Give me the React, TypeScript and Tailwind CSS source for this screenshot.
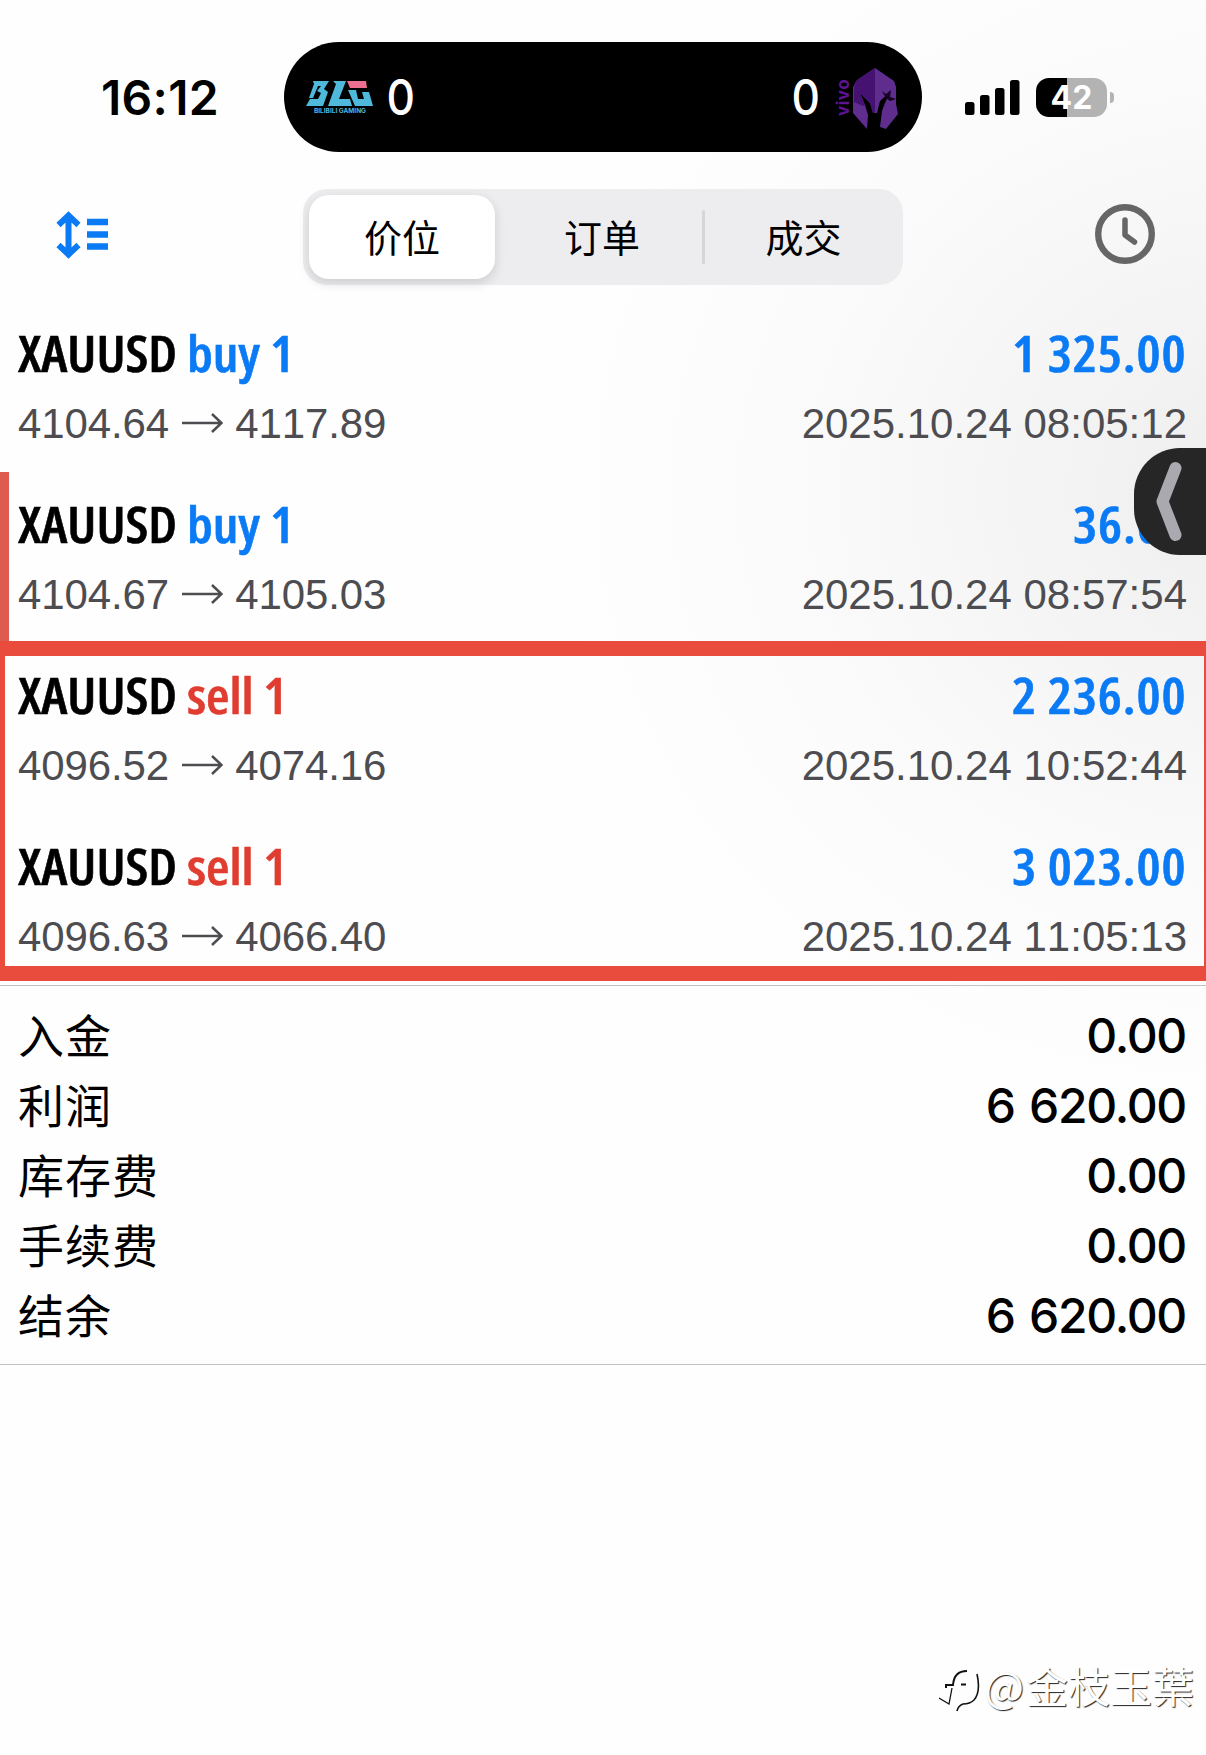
import clsx from "clsx"

type Trade = {
  side: "buy" | "sell"
  open: string
  close: string
  profit: string
  time: string
}

const trades: Trade[] = [
  { side: "buy", open: "4104.64", close: "4117.89", profit: "1 325.00", time: "2025.10.24 08:05:12" },
  { side: "buy", open: "4104.67", close: "4105.03", profit: "36.00", time: "2025.10.24 08:57:54" },
  { side: "sell", open: "4096.52", close: "4074.16", profit: "2 236.00", time: "2025.10.24 10:52:44" },
  { side: "sell", open: "4096.63", close: "4066.40", profit: "3 023.00", time: "2025.10.24 11:05:13" },
]

const summary = [
  { label: "入金", value: "0.00" },
  { label: "利润", value: "6 620.00" },
  { label: "库存费", value: "0.00" },
  { label: "手续费", value: "0.00" },
  { label: "结余", value: "6 620.00" },
]

function BlgLogo() {
  return (
    <svg width="68" height="34" viewBox="0 0 68 34" fill="#4fb9dc">
      <path d="M7 1H23L18 9L22 12L17 26H0L4 19H12L15 13L11 11L15 6H12L7 18H3L8 4Z" />
      <path d="M27 1H40L33 19H44L46 26H22L30 4Z" />
      <path d="M42 10H50L52 19H58L56 12H63L67 26H49Z" />
      <path d="M41 1H60L61 8H44Z" fill="#ee6f92" />
      <text x="8" y="32.5" fontSize="6" fontWeight="700" textLength="52" lengthAdjust="spacingAndGlyphs" fontFamily="Inter, sans-serif">
        BILIBILI GAMING
      </text>
    </svg>
  )
}

function HelmetLogo() {
  return (
    <svg className="mt-[3px]" width="48" height="64" viewBox="0 0 48 64">
      <path d="M23 1L42 14L44 20V37L46 47L34 62L28 60L30 44L33 36L38 25L28 34L25 46H21L18 36L8 26L13 38L16 48L15 62L1 46V20L5 13Z" fill="#5e2d8e" />
      <path d="M23 1V46H21L18 36L8 26L13 38L11 39L2 35V20L5 13Z" fill="#451272" />
      <path d="M30 24L34 27L39 23L38 30L44 32L38 34L34 31Z" fill="#160322" />
    </svg>
  )
}

function StatusBar() {
  return (
    <div className="flex h-[152px] pt-[42px] font-['Inter',sans-serif]">
      <div className="flex h-[110px] w-[284px] items-center pt-[2px] pl-[101px] text-[48px] font-semibold tracking-[0.3px]">
        16:12
      </div>
      <div className="flex h-[110px] w-[638px] items-center justify-between rounded-[55px] bg-black pr-[22px] pl-[22px] text-white">
        <div className="flex items-center gap-[11px]">
          <BlgLogo />
          <span className="scale-x-90 text-[49px] leading-none font-medium">0</span>
        </div>
        <div className="flex items-center">
          <span className="mr-[13px] scale-x-90 text-[49px] leading-none font-medium">0</span>
          <span className="mr-[1px] h-[38px] w-[16px] rotate-180 text-[17px] leading-[16px] font-bold tracking-[0.5px] text-[#5e1391] [writing-mode:vertical-rl]">
            vivo
          </span>
          <HelmetLogo />
        </div>
      </div>
      <div className="flex h-[110px] items-center pt-px pl-[43px]">
        <svg width="55" height="36" viewBox="0 0 55 36">
          <rect x="0" y="22" width="9.5" height="13" rx="2.5" />
          <rect x="15" y="15" width="9.5" height="20" rx="2.5" />
          <rect x="30" y="8" width="9.5" height="27" rx="2.5" />
          <rect x="45" y="0" width="9.5" height="35" rx="2.5" />
        </svg>
        <div className="ml-[16px] flex h-[39px] w-[71px] items-center justify-center rounded-[13px] bg-[linear-gradient(90deg,#000_44%,#b3b3b3_44%)] pt-px text-[32px] font-bold text-white">
          42
        </div>
        <div className="ml-[3px] h-[11px] w-[4px] rounded-r-full bg-[#b3b3b3]" />
      </div>
    </div>
  )
}

function Toolbar() {
  return (
    <div className="flex items-center px-[51px] pt-[37px]">
      <div className="w-[252px] pb-[5px] pl-[5px]">
        <svg width="54" height="48" viewBox="0 0 54 48" fill="none" stroke="#0a7af5">
          <path d="M12.5 4V44M2.5 14L12.5 4.500L22.5 14M2.5 34L12.5 43.500L22.500 34" strokeWidth="6" />
          <path d="M31 11H52M31 23.500H52M31 35.500H52" strokeWidth="6.500" />
        </svg>
      </div>
      <div className="flex h-[96px] w-[600px] items-center rounded-[24px] bg-[#ededef] p-[6px] font-['Noto_Sans_CJK_SC',sans-serif] text-[38px]">
        <div className="flex h-[84px] w-[186px] items-center justify-center rounded-[20px] bg-white pb-[4px] shadow-[0_4px_12px_rgba(0,0,0,0.14)]">
          价位
        </div>
        <div className="flex-1 pb-[4px] pl-[7px] text-center">订单</div>
        <div className="h-[54px] w-[3px] rounded-full bg-[#d6d6d9]" />
        <div className="w-[192px] pb-[4px] pl-[5px] text-center">成交</div>
      </div>
      <svg className="mb-[6px] ml-auto" width="60" height="60" viewBox="0 0 60 60" fill="none" stroke="#666" strokeLinecap="round" strokeLinejoin="round">
        <circle cx="30" cy="30" r="26.8" strokeWidth="6.400" />
        <path d="M30 16V31L39.500 38" strokeWidth="5.500" />
      </svg>
    </div>
  )
}

function TradeRow({ trade }: { trade: Trade }) {
  return (
    <div className="h-[171px] pt-[21px] pr-[19px] pl-[18px]">
      <div className="flex h-[64px] items-center justify-between font-['Open_Sans',sans-serif] text-[51px] leading-[64px] font-semibold [font-stretch:75%]">
        <div className="origin-left scale-x-[1.055] whitespace-pre [-webkit-text-stroke:0.6px]">
          XAUUSD <span className={clsx(trade.side === "buy" ? "text-[#0a7af5]" : "text-[#e03c2f]")}>{trade.side} 1</span>
        </div>
        <div className="origin-right scale-x-[1.055] tracking-[0.9px] text-[#0a7af5] [-webkit-text-stroke:0.6px]">{trade.profit}</div>
      </div>
      <div className="flex h-[77px] items-center justify-between pt-px font-['Liberation_Sans',sans-serif] text-[42px] text-[#4d4d51] [font-kerning:none]">
        <div className="flex items-center tracking-[-0.1px]">
          {trade.open}
          <svg className="mx-[12px]" width="42" height="22" viewBox="0 0 42 22" fill="none" stroke="currentColor" strokeWidth="2.500">
            <path d="M1 11H40M31 2L40.500 11L31 20" />
          </svg>
          {trade.close}
        </div>
        <div>{trade.time}</div>
      </div>
    </div>
  )
}

function Watermark() {
  return (
    <div className="absolute right-[12px] bottom-[39px] flex items-center font-['Noto_Sans_CJK_TC',sans-serif] text-[42px] text-white [text-shadow:1px_1px_1px_#222]">
      <svg className="mt-[6px] mr-[3px]" width="42" height="52" viewBox="0 0 42 52" fill="none" stroke="#111">
        <path d="M7 26V23H14Q15 9 28 9M22 22.500H27" strokeWidth="2" />
        <path d="M38 12Q42 30 35 38Q31 42 24 42Q19 44 18 49" strokeWidth="1.600" />
        <path d="M0 36L10 42L13 26" strokeWidth="1.300" />
      </svg>
      <span className="mr-[2px]">@</span>
      金枝玉葉
    </div>
  )
}

export default function App() {
  return (
    <div className="relative h-[1755px] w-[1206px] overflow-hidden bg-[#fefefe] bg-[radial-gradient(ellipse_680px_620px_at_1240px_490px,#eeeeee_0%,#f6f6f6_40%,#fcfcfc_75%,#fefefe_100%)] text-black">
      <StatusBar />
      <Toolbar />

      <div className="mt-[14px]">
        {trades.map((trade) => (
          <TradeRow key={trade.time} trade={trade} />
        ))}
      </div>

      <div className="mt-[2px] border-y border-[#c0c4c0] pt-[15px] pr-[20px] pb-[13px] pl-[18px]">
        {summary.map((row) => (
          <div key={row.label} className="flex h-[70px] items-center justify-between">
            <span className="pb-[6px] font-['Noto_Sans_CJK_SC',sans-serif] text-[46px] tracking-[1px]">{row.label}</span>
            <span className="font-['Inter',sans-serif] text-[48px] font-medium tracking-[-1.3px] [word-spacing:3px]">{row.value}</span>
          </div>
        ))}
      </div>

      {/* highlight marks over the list */}
      <div className="absolute top-[472px] left-0 h-[170px] w-[9px] bg-[#dd5b4f]" />
      <div className="absolute top-[641px] left-0 h-[340px] w-full border-y-[15px] border-r-2 border-l-[5px] border-[#e94b3d]" />

      {/* side drawer handle */}
      <div className="absolute top-[448px] right-0 flex h-[107px] w-[72px] items-center rounded-l-[46px] bg-[#262626] pl-[22px]">
        <svg width="28" height="82" viewBox="0 0 28 82" fill="none" stroke="#aaa9b0" strokeWidth="12" strokeLinecap="round" strokeLinejoin="round">
          <path d="M19.500 7L6.500 40.500L19.500 74" />
        </svg>
      </div>

      <Watermark />
    </div>
  )
}
